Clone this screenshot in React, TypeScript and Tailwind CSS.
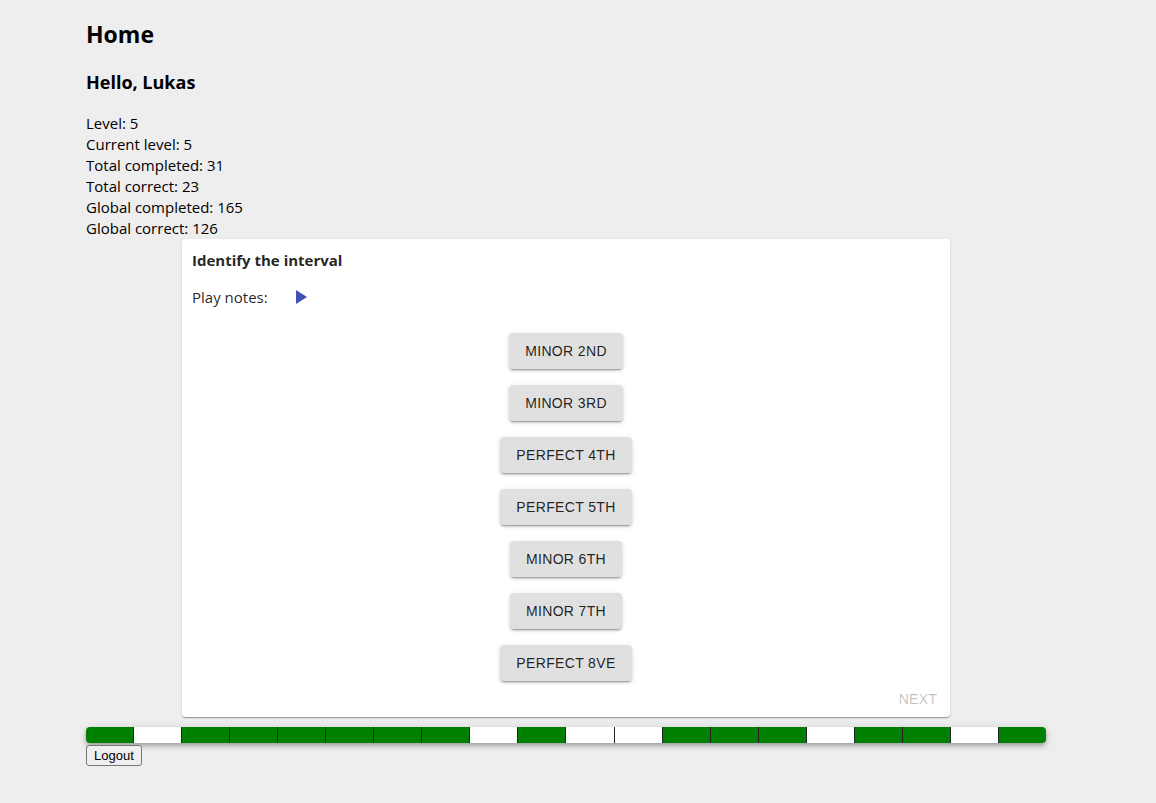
const stats = [
  { label: "Level", value: 5 },
  { label: "Current level", value: 5 },
  { label: "Total completed", value: 31 },
  { label: "Total correct", value: 23 },
  { label: "Global completed", value: 165 },
  { label: "Global correct", value: 126 },
];

const intervals = [
  "Minor 2nd",
  "Minor 3rd",
  "Perfect 4th",
  "Perfect 5th",
  "Minor 6th",
  "Minor 7th",
  "Perfect 8ve",
];

const results = [
  true, false, true, true, true, true, true, true, false, true,
  false, false, true, true, true, false, true, true, false, true,
];

const raised =
  "shadow-[0_3px_1px_-2px_rgba(0,0,0,0.2),0_2px_2px_0_rgba(0,0,0,0.14),0_1px_5px_0_rgba(0,0,0,0.12)]";

function Stats() {
  return (
    <ul className="text-[15px] leading-[21px]">
      {stats.map((s) => (
        <li key={s.label}>
          {s.label}: {s.value}
        </li>
      ))}
    </ul>
  );
}

function QuestionCard() {
  return (
    <section className="mx-auto flex w-4/5 flex-col rounded bg-white text-black/87 shadow-[0_2px_1px_-1px_rgba(0,0,0,0.2),0_1px_1px_0_rgba(0,0,0,0.14),0_1px_3px_0_rgba(0,0,0,0.12)]">
      <h4 className="px-[10px] pt-[11px] text-[15px] leading-[21px] font-bold">
        Identify the interval
      </h4>
      <div className="flex items-center pt-[11px] pl-[10px] text-[15px] leading-[30px]">
        <span>Play notes:</span>
        <button type="button" aria-label="Play notes" className="ml-5 text-[#3f51b5]">
          <svg viewBox="0 0 24 24" className="size-6" fill="currentColor" aria-hidden="true">
            <path d="M8 5v14l11-7z" />
          </svg>
        </button>
      </div>
      <div className="flex flex-col items-center gap-4 pt-[21px] font-['Liberation_Sans',Arial,sans-serif]">
        {intervals.map((name) => (
          <button
            key={name}
            type="button"
            className={`h-9 rounded bg-[#e0e0e0] px-4 text-sm tracking-wide uppercase ${raised}`}
          >
            {name}
          </button>
        ))}
      </div>
      <button
        type="button"
        disabled
        className="h-9 w-16 self-end font-['Liberation_Sans',Arial,sans-serif] text-sm tracking-wide text-black/26 uppercase"
      >
        Next
      </button>
    </section>
  );
}

function Progress() {
  return (
    <div
      role="img"
      aria-label="Answer history"
      className="mt-[10px] flex h-4 overflow-hidden rounded shadow-[0_2px_4px_-1px_rgba(0,0,0,0.2),0_4px_5px_0_rgba(0,0,0,0.14),0_1px_10px_0_rgba(0,0,0,0.12)]"
    >
      {results.map((correct, i) => (
        <div
          key={i}
          className={`flex-1 border-[#212121] not-last:border-r ${correct ? "bg-[#008000]" : "bg-white"}`}
        />
      ))}
    </div>
  );
}

export default function App() {
  return (
    <div className="min-h-screen bg-[#eeeeee] pr-6 font-['Open_Sans',sans-serif] text-black">
      <main className="mx-auto max-w-[960px] pt-[18px] pb-6">
        <h2 className="text-[23px] leading-8 font-bold">Home</h2>
        <h3 className="mt-5 mb-[19px] text-lg leading-6 font-bold">Hello, Lukas</h3>
        <Stats />
        <QuestionCard />
        <Progress />
        <button
          type="button"
          className="mt-[2px] block h-[21px] rounded-[3px] border border-[#767676] bg-[#efefef] px-[7px] font-['Liberation_Sans',Arial,sans-serif] text-[13px] leading-[15px]"
        >
          Logout
        </button>
      </main>
    </div>
  );
}
